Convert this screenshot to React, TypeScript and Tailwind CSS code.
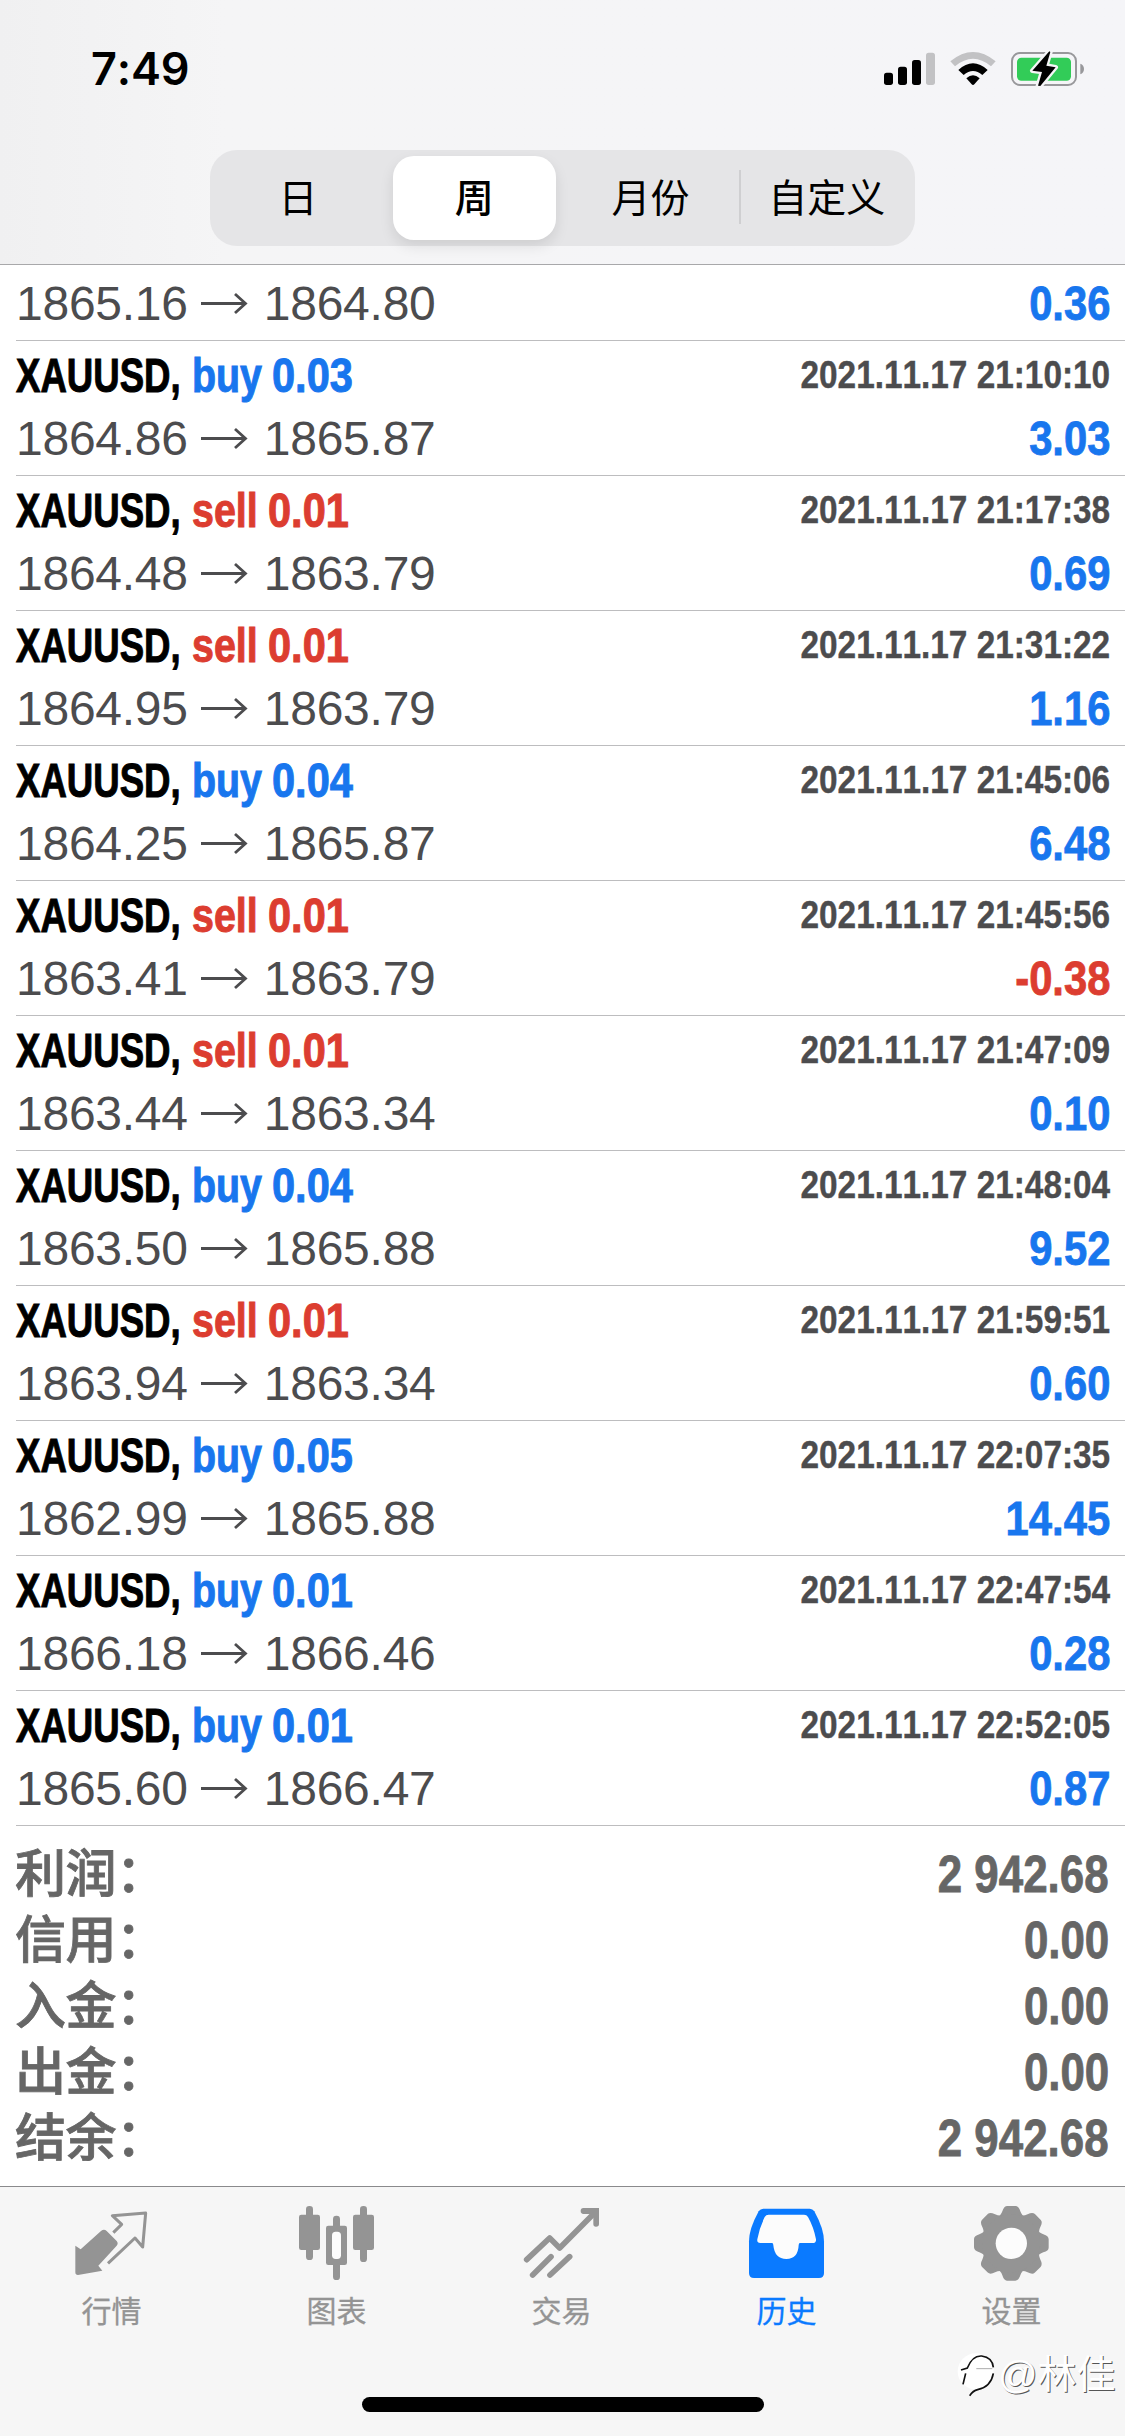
import type { ReactNode } from "react";

type Deal = {
  side: "buy" | "sell";
  volume: string;
  open: string;
  close: string;
  time: string;
  profit: string;
};

const DEALS: Deal[] = [
  { side: "buy", volume: "0.03", open: "1864.86", close: "1865.87", time: "2021.11.17 21:10:10", profit: "3.03" },
  { side: "sell", volume: "0.01", open: "1864.48", close: "1863.79", time: "2021.11.17 21:17:38", profit: "0.69" },
  { side: "sell", volume: "0.01", open: "1864.95", close: "1863.79", time: "2021.11.17 21:31:22", profit: "1.16" },
  { side: "buy", volume: "0.04", open: "1864.25", close: "1865.87", time: "2021.11.17 21:45:06", profit: "6.48" },
  { side: "sell", volume: "0.01", open: "1863.41", close: "1863.79", time: "2021.11.17 21:45:56", profit: "-0.38" },
  { side: "sell", volume: "0.01", open: "1863.44", close: "1863.34", time: "2021.11.17 21:47:09", profit: "0.10" },
  { side: "buy", volume: "0.04", open: "1863.50", close: "1865.88", time: "2021.11.17 21:48:04", profit: "9.52" },
  { side: "sell", volume: "0.01", open: "1863.94", close: "1863.34", time: "2021.11.17 21:59:51", profit: "0.60" },
  { side: "buy", volume: "0.05", open: "1862.99", close: "1865.88", time: "2021.11.17 22:07:35", profit: "14.45" },
  { side: "buy", volume: "0.01", open: "1866.18", close: "1866.46", time: "2021.11.17 22:47:54", profit: "0.28" },
  { side: "buy", volume: "0.01", open: "1865.60", close: "1866.47", time: "2021.11.17 22:52:05", profit: "0.87" },
];

const TOTALS = [
  { label: "利润：", value: "2 942.68" },
  { label: "信用：", value: "0.00" },
  { label: "入金：", value: "0.00" },
  { label: "出金：", value: "0.00" },
  { label: "结余：", value: "2 942.68" },
];

const PERIODS = ["日", "周", "月份", "自定义"];

function StatusBar() {
  return (
    <div className="h-[150px] flex items-start justify-between pl-[91px] pr-[39px] pt-[42px]">
      <span className="font-['Inter'] font-semibold text-[45px] leading-[54px] tracking-[-0.2px]">
        7:49
      </span>
      <div className="flex items-start pt-[8px]">
        {/* Cell signal */}
        <svg className="w-[54px] h-[38px] mr-[12px]" viewBox="63 60 162 114">
          <rect x="66" y="128" width="27" height="37" rx="8" />
          <rect x="108" y="110" width="27" height="55" rx="8" />
          <rect x="150" y="90" width="27" height="75" rx="8" />
          <rect x="192" y="68" width="27" height="97" rx="8" fill="#c2c2c4" />
        </svg>
        {/* Wi-Fi */}
        <svg className="w-[48px] h-[38px] mr-[13px]" viewBox="261 60 144 114">
          <path d="M265 94 Q333 38 401 94 L387 109 Q333 64 279 109 Z" fill="#c2c2c4" />
          <path d="M289 120 Q333 80 377 120 L361 135 Q333 111 305 135 Z" />
          <path d="M313 145 Q333 126 353 145 L337 163 Q333 167 329 163 Z" />
        </svg>
        {/* Battery, charging */}
        <svg className="w-[76px] h-[38px]" viewBox="444 60 228 114">
          <rect x="450" y="69" width="192" height="96" rx="24" fill="none" stroke="#98989b" strokeWidth="6" />
          <path d="M655 101 Q666 105 666 117 Q666 129 655 133 Z" fill="#98989b" />
          <rect x="465" y="83" width="162" height="69" rx="13" fill="#32cc58" />
          <path
            d="M562 64 L511 122 L540 126 L528 167 L535 168 L581 112 L553 107 L565 66 Z"
            stroke="#f5f5f7"
            strokeWidth="14"
            strokeLinejoin="round"
          />
          <path d="M562 64 L511 122 L540 126 L528 167 L535 168 L581 112 L553 107 L565 66 Z" />
        </svg>
      </div>
    </div>
  );
}

function PeriodPicker() {
  return (
    <div className="mx-auto w-[705px] h-[96px] rounded-[27px] bg-[#e5e5e7] grid grid-cols-4 text-[39px] leading-none">
      {PERIODS.map((period, i) => (
        <div key={period} className="relative flex items-center justify-center">
          {i === 1 && (
            <div className="absolute inset-x-[7px] inset-y-[6px] rounded-[21px] bg-white shadow-[0_6px_14px_rgba(0,0,0,0.10)]" />
          )}
          {i === 3 && (
            <div className="absolute left-0 top-[20px] w-[2px] h-[54px] bg-[#cfcfd1]" />
          )}
          <span className={i === 1 ? "relative font-medium" : "relative"}>
            {period}
          </span>
        </div>
      ))}
    </div>
  );
}

function Prices({ open, close }: { open: string; close: string }) {
  return (
    <div className="flex items-center h-[63px] text-[48px] leading-[63px] tracking-[-0.25px] text-[#4c4c4e]">
      <span>{open}</span>
      <svg className="w-[48px] h-[24px] ml-[13px] mr-[15px]" viewBox="0 0 48 24">
        <path
          d="M0 11.5 H45 M34 2 L44.5 11.5 L34 21"
          fill="none"
          stroke="#4c4c4e"
          strokeWidth="2.8"
        />
      </svg>
      <span>{close}</span>
    </div>
  );
}

function Profit({ value }: { value: string }) {
  return (
    <span
      className={`inline-block origin-right scale-x-[0.87] font-bold text-[48px] leading-[63px] [-webkit-text-stroke:0.8px_currentColor] ${
        value.startsWith("-") ? "text-[#dc3d30]" : "text-[#1876ee]"
      }`}
    >
      {value}
    </span>
  );
}

function DealRow({ deal }: { deal: Deal }) {
  const color = deal.side === "buy" ? "text-[#1876ee]" : "text-[#dc3d30]";
  return (
    <div className="ml-[16px] pr-[15px] h-[135px] pt-[3px] border-b border-[#bdbdbf]">
      <div className="flex justify-between items-start h-[63px] font-bold text-[48px] leading-[63px] whitespace-pre">
        <div className="flex [-webkit-text-stroke:1px_currentColor]">
          <span className="block w-[176px]">
            <span className="inline-block origin-left scale-x-[0.762]">XAUUSD,</span>
          </span>
          <span className={`block ${deal.side === "buy" ? "w-[80px]" : "w-[76px]"} ${color}`}>
            <span className="inline-block origin-left scale-x-[0.82]">{deal.side}</span>
          </span>
          <span className={`inline-block origin-left scale-x-[0.865] ${color}`}>
            {deal.volume}
          </span>
        </div>
        <span className="inline-block origin-right scale-x-[0.855] text-[39px] leading-[61px] text-[#4c4c4e] [-webkit-text-stroke:0.4px_currentColor]">
          {deal.time}
        </span>
      </div>
      <div className="flex justify-between">
        <Prices open={deal.open} close={deal.close} />
        <Profit value={deal.profit} />
      </div>
    </div>
  );
}

function TabItem({
  label,
  viewBox,
  active,
  children,
}: {
  label: string;
  viewBox: string;
  active?: boolean;
  children: ReactNode;
}) {
  return (
    <div
      className={`flex-1 flex flex-col items-center pt-[18px] ${
        active ? "text-[#0a7aff]" : "text-[#949494]"
      }`}
    >
      <svg className="w-[75px] h-[75px] overflow-visible" viewBox={viewBox} fill="currentColor">
        {children}
      </svg>
      <span className="mt-[15px] pr-[2px] text-[30px] leading-[34px] [-webkit-text-stroke:0.3px_currentColor]">
        {label}
      </span>
    </div>
  );
}

function TabBar() {
  return (
    <div className="relative h-[250px] border-t border-[#8a8a8c] bg-[#f6f6f6]">
      <div className="flex">
        <TabItem label="行情" viewBox="75 75 225 225">
          <path d="M76 197 L92 208 L153 153 Q162 146 170 153 L200 183 Q206 190 200 197 L145 257 L157 272 L84 285 Q76 285 76 277 Z" />
          <path
            d="M190 158 L215 133 L187 107 L287 99 L278 201 L255 174 L174 250"
            fill="none"
            stroke="currentColor"
            strokeWidth="9"
            strokeLinejoin="round"
          />
        </TabItem>
        <TabItem label="图表" viewBox="750 75 225 225">
          <rect x="768" y="78" width="21" height="162" rx="10" />
          <rect x="747" y="104" width="63" height="106" rx="7" />
          <rect x="930" y="78" width="21" height="168" rx="10" />
          <rect x="909" y="104" width="63" height="106" rx="7" />
          <rect x="849" y="107" width="21" height="193" rx="10" />
          <rect x="828" y="137" width="63" height="118" rx="7" />
          <rect x="846" y="155" width="27" height="82" rx="11" fill="#fcfcfc" />
        </TabItem>
        <TabItem label="交易" viewBox="75 75 225 225">
          <path
            d="M80 239 L149 174 L179 204 L284 98 M98 285 L153 230 M150 285 L209 230"
            fill="none"
            stroke="currentColor"
            strokeWidth="17"
            strokeLinecap="round"
            strokeLinejoin="round"
          />
          <path d="M250 84 H297 V132 Q297 140 288 140 Q280 140 280 132 V102 H250 Q242 101 242 93 Q242 84 250 84 Z" />
        </TabItem>
        <TabItem label="历史" viewBox="750 75 225 225" active>
          <path d="M790 86 H929 Q938 86 943 94 Q972 147 972 184 V279 Q972 294 957 294 H762 Q747 294 747 279 V184 Q747 147 776 94 Q781 86 790 86 Z" />
          <path
            d="M806 104 H912 Q920 104 924 111 Q941 141 948 178 Q949 189 938 189 H900 Q896 189 896 196 Q894 237 859 237 Q824 237 820 196 Q820 189 816 189 H781 Q770 189 772 178 Q778 144 794 111 Q798 104 806 104 Z"
            fill="#fcfcfc"
          />
        </TabItem>
        <TabItem label="设置" viewBox="165 75 225 225">
          {[0, 45, 90, 135, 180, 225, 270, 315].map((angle) => (
            <path
              key={angle}
              transform={`rotate(${angle} 274 190)`}
              d="M232 112 Q242 108 247 94 Q252 78 262 78 H287 Q296 78 301 94 Q306 108 316 112 L300 140 H248 Z"
            />
          ))}
          <circle cx="274" cy="190" r="87" />
          <circle cx="274" cy="190" r="47" fill="#fcfcfc" />
        </TabItem>
      </div>
      {/* Home indicator */}
      <div className="absolute left-[362px] top-[210px] w-[402px] h-[15px] rounded-full bg-black" />
      <Watermark />
    </div>
  );
}

function Watermark() {
  return (
    <div className="absolute left-[955px] top-[161px] flex items-center text-white">
      <svg className="w-[43px] h-[54px]" viewBox="30 30 129 162">
        <circle cx="92" cy="100" r="54" fill="#fff" />
        {/* Speech bubble outline with its tail */}
        <path
          d="M48 96 L67 90 Q82 52 110 54 Q142 58 145 88 M145 106 Q138 146 98 155 Q84 158 74 173 M62 106 L54 139"
          fill="none"
          stroke="#111"
          strokeWidth="5"
        />
        <path d="M94 92 H142" stroke="#999" strokeWidth="2.5" />
      </svg>
      <span className="text-[39px] leading-[48px] [text-shadow:1px_1px_0_#555]">@林佳</span>
    </div>
  );
}

export default function App() {
  return (
    <div className="w-[1125px] h-[2436px] overflow-hidden flex flex-col bg-white text-black font-['Liberation_Sans','Noto_Sans_CJK_SC',sans-serif] [font-kerning:none]">
      <header className="h-[265px] shrink-0 border-b border-[#a8a8aa] bg-linear-to-r from-[#f0f0f1] via-[#f5f5f6] via-20% to-[#f5f5f8]">
        <StatusBar />
        <PeriodPicker />
      </header>

      <main className="flex-1">
        {/* First deal is scrolled halfway under the header */}
        <div className="ml-[16px] pr-[15px] h-[76px] pt-[7px] flex justify-between items-start border-b border-[#bdbdbf]">
          <Prices open="1865.16" close="1864.80" />
          <Profit value="0.36" />
        </div>
        {DEALS.map((deal) => (
          <DealRow key={deal.time} deal={deal} />
        ))}

        <div className="pl-[15px] pr-[16px] pt-[16px] text-[#666]">
          {TOTALS.map((total) => (
            <div key={total.label} className="flex justify-between h-[66px] leading-[66px] text-[51px]">
              <span className="font-medium tracking-[-0.5px] [-webkit-text-stroke:0.8px_currentColor]">
                {total.label}
              </span>
              <span className="inline-block origin-right scale-x-[0.86] font-bold [-webkit-text-stroke:0.8px_currentColor]">
                {total.value}
              </span>
            </div>
          ))}
        </div>
      </main>

      <TabBar />
    </div>
  );
}
